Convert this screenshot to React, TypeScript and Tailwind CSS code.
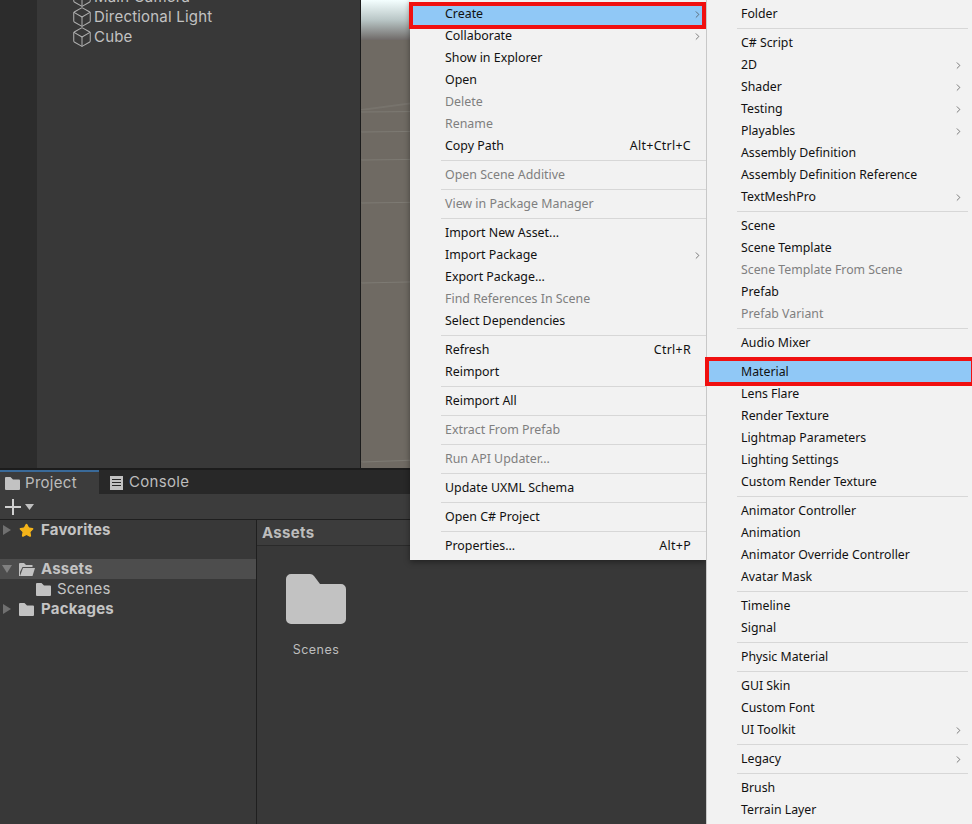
import { ChevronRight, Box, Star } from 'lucide-react'

type Item = { label?: string; disabled?: boolean; sub?: boolean; shortcut?: string; active?: string; sep?: boolean }

const sep: Item = { sep: true }

const mainItems: Item[] = [
  { label: 'Create', sub: true, active: '-left-px right-0 -top-px -bottom-[4px]' },
  { label: 'Collaborate', sub: true },
  { label: 'Show in Explorer' },
  { label: 'Open' },
  { label: 'Delete', disabled: true },
  { label: 'Rename', disabled: true },
  { label: 'Copy Path', shortcut: 'Alt+Ctrl+C' },
  sep,
  { label: 'Open Scene Additive', disabled: true },
  sep,
  { label: 'View in Package Manager', disabled: true },
  sep,
  { label: 'Import New Asset...' },
  { label: 'Import Package', sub: true },
  { label: 'Export Package...' },
  { label: 'Find References In Scene', disabled: true },
  { label: 'Select Dependencies' },
  sep,
  { label: 'Refresh', shortcut: 'Ctrl+R' },
  { label: 'Reimport' },
  sep,
  { label: 'Reimport All' },
  sep,
  { label: 'Extract From Prefab', disabled: true },
  sep,
  { label: 'Run API Updater...', disabled: true },
  sep,
  { label: 'Update UXML Schema' },
  sep,
  { label: 'Open C# Project' },
  sep,
  { label: 'Properties...', shortcut: 'Alt+P' },
]

const createItems: Item[] = [
  { label: 'Folder' },
  sep,
  { label: 'C# Script' },
  { label: '2D', sub: true },
  { label: 'Shader', sub: true },
  { label: 'Testing', sub: true },
  { label: 'Playables', sub: true },
  { label: 'Assembly Definition' },
  { label: 'Assembly Definition Reference' },
  { label: 'TextMeshPro', sub: true },
  sep,
  { label: 'Scene' },
  { label: 'Scene Template' },
  { label: 'Scene Template From Scene', disabled: true },
  { label: 'Prefab' },
  { label: 'Prefab Variant', disabled: true },
  sep,
  { label: 'Audio Mixer' },
  sep,
  { label: 'Material', active: '-left-[2px] -right-[3px] -top-[4px] -bottom-[3px]' },
  { label: 'Lens Flare' },
  { label: 'Render Texture' },
  { label: 'Lightmap Parameters' },
  { label: 'Lighting Settings' },
  { label: 'Custom Render Texture' },
  sep,
  { label: 'Animator Controller' },
  { label: 'Animation' },
  { label: 'Animator Override Controller' },
  { label: 'Avatar Mask' },
  sep,
  { label: 'Timeline' },
  { label: 'Signal' },
  sep,
  { label: 'Physic Material' },
  sep,
  { label: 'GUI Skin' },
  { label: 'Custom Font' },
  { label: 'UI Toolkit', sub: true },
  sep,
  { label: 'Legacy', sub: true },
  sep,
  { label: 'Brush' },
  { label: 'Terrain Layer' },
]

function Menu({ items, className, itemClass, sepClass, arrowClass }: { items: Item[]; className: string; itemClass: string; sepClass: string; arrowClass: string }) {
  return (
    <div className={`absolute top-0 flex flex-col bg-[#f2f2f2] py-[3px] font-['Noto_Sans',sans-serif] ${className}`}>
      {items.map((item, i) =>
        item.sep ? (
          <div key={i} className={`flex h-[7px] items-center ${sepClass}`}>
            <div className="h-px w-full bg-[#d7d7d7]" />
          </div>
        ) : (
          <div
            key={i}
            className={`relative flex h-[22px] shrink-0 items-center pr-[15px] ${itemClass} ${item.active ? 'bg-[#90c8f6]' : ''} ${item.disabled ? 'text-[#7f7f7f]' : 'text-[#111]'}`}
          >
            <span className="flex-1">{item.label}</span>
            {item.shortcut && <span className="tracking-[0.3px]">{item.shortcut}</span>}
            {item.sub && <ChevronRight className={`absolute h-[11px] w-[11px] text-[#444] ${arrowClass}`} strokeWidth={1.5} />}
            {item.active && <div className={`absolute border-[4px] border-[#f01010] ${item.active}`} />}
          </div>
        ),
      )}
    </div>
  )
}

function ClosedFolder({ className }: { className: string }) {
  return (
    <svg className={className} viewBox="0 0 15 13">
      <path d="M0 1a1 1 0 0 1 1-1H5.500L8 2.500H14a1 1 0 0 1 1 1V12a1 1 0 0 1-1 1H1a1 1 0 0 1-1-1Z" fill="#c2c2c2" />
    </svg>
  )
}

function OpenFolder({ className }: { className: string }) {
  return (
    <svg className={className} viewBox="0 0 16 13">
      <path d="M0 1a1 1 0 0 1 1-1H5L7 2H13.500V4H3.500L1 9V13H0Z" fill="#c2c2c2" />
      <path d="M4 5H16L13.500 13H1Z" fill="#c2c2c2" />
    </svg>
  )
}

function GameObject({ label }: { label: string }) {
  return (
    <div className="flex h-5 items-center gap-px pl-[34px] text-[#c2c2c2]">
      <Box className="h-[22px] w-[22px] shrink-0 text-[#b0b0b0]" strokeWidth={1.1} />
      <span className="font-['Inter',sans-serif] text-[15px] tracking-[0.2px]">{label}</span>
    </div>
  )
}

function SceneView() {
  return (
    <div className="relative min-w-0 flex-1 bg-[#6f6a63]">
      <svg className="h-full w-full" viewBox="0 0 50 468" preserveAspectRatio="none">
        <defs>
          <linearGradient id="sky" x1="0" y1="0" x2="0" y2="1">
            <stop offset="0" stopColor="#f4ffff" />
            <stop offset="0.5" stopColor="#b9c6c6" />
            <stop offset="1" stopColor="#6f6a68" />
          </linearGradient>
        </defs>
        <rect width="50" height="40" fill="url(#sky)" />
        <g stroke="#7d7a73" strokeWidth="1" fill="none">
          <path d="M0 112 L50 107" />
          <path d="M0 132 L50 125" />
          <path d="M0 160 L50 153" />
          <path d="M0 203 L50 195" />
          <path d="M0 283 L50 270" />
          <path d="M0 462 L50 440" />
          <path d="M0 110 L38 48" opacity="0.6" />
        </g>
      </svg>
    </div>
  )
}

function TreeRow({ children, selected }: { children: React.ReactNode; selected?: boolean }) {
  return <div className={`flex h-5 items-center ${selected ? 'bg-[#4d4d4d]' : ''}`}>{children}</div>
}

function Arrow({ open }: { open?: boolean }) {
  return (
    <svg className="ml-[2px] mr-[7px] h-[10px] w-[10px] shrink-0" viewBox="0 0 10 10">
      {open ? <path d="M0 1H10L5 9Z" fill="#808080" /> : <path d="M1 0V10L9 5Z" fill="#707070" />}
    </svg>
  )
}

export default function App() {
  return (
    <div className="relative flex h-[824px] w-[972px] flex-col overflow-hidden bg-[#383838] font-['Inter',sans-serif]">
      {/* top panes */}
      <div className="flex h-[468px] shrink-0">
        <div className="w-[37px] bg-[#2c2c2c]" />
        <div className="w-[323px] overflow-hidden bg-[#383838]">
          <div className="-mt-[13px]">
            <GameObject label="Main Camera" />
            <GameObject label="Directional Light" />
            <GameObject label="Cube" />
          </div>
        </div>
        <div className="w-px bg-[#1c1c1c]" />
        <SceneView />
      </div>
      <div className="h-[2px] shrink-0 bg-[#1c1c1c]" />

      {/* tabs */}
      <div className="flex h-[24px] shrink-0 bg-[#282828] text-[15px] tracking-[0.3px] text-[#bdbdbd]">
        <div className="flex w-[99px] items-center gap-[5px] border-t-2 border-[#3a6a99] bg-[#3c3c3c] pl-[5px] pt-px">
          <ClosedFolder className="h-[13px] w-[15px]" />
          Project
        </div>
        <div className="flex items-center gap-[6px] pl-[11px] pt-px">
          <svg className="h-[14px] w-[13px]" viewBox="0 0 13 14">
            <path d="M0 0H13V14H0Z M2 3V4H11V3Z M2 6V7H11V6Z M2 9V10H11V9Z" fill="#c2c2c2" fillRule="evenodd" />
          </svg>
          Console
        </div>
      </div>

      {/* toolbar */}
      <div className="flex h-[26px] shrink-0 items-center gap-[4px] border-b border-[#1f1f1f] bg-[#3c3c3c] pl-[5px] pt-px">
        <svg className="h-[16px] w-[16px]" viewBox="0 0 16 16">
          <path d="M0 8H16M8 0V16" stroke="#d0d0d0" strokeWidth="2" />
        </svg>
        <svg className="h-[6px] w-[9px]" viewBox="0 0 9 6">
          <path d="M0 0H9L4.500 6Z" fill="#c0c0c0" />
        </svg>
      </div>

      {/* project browser */}
      <div className="flex min-h-0 flex-1">
        <div className="w-[256px] shrink-0 text-[15px] tracking-[0.2px] text-[#c4c4c4]">
          <TreeRow>
            <Arrow />
            <Star className="mr-[7px] h-[15px] w-[15px] fill-[#f4b41a] text-[#f4b41a]" />
            <span className="font-bold">Favorites</span>
          </TreeRow>
          <div className="h-[19px]" />
          <TreeRow selected>
            <Arrow open />
            <OpenFolder className="mr-[6px] h-[13px] w-[16px]" />
            <span className="font-bold">Assets</span>
          </TreeRow>
          <TreeRow>
            <div className="w-[36px]" />
            <ClosedFolder className="mr-[6px] h-[13px] w-[15px]" />
            <span>Scenes</span>
          </TreeRow>
          <TreeRow>
            <Arrow />
            <ClosedFolder className="mr-[7px] h-[13px] w-[15px]" />
            <span className="font-bold">Packages</span>
          </TreeRow>
        </div>
        <div className="w-px bg-[#1f1f1f]" />
        <div className="flex min-w-0 flex-1 flex-col">
          <div className="flex h-[26px] items-center border-b border-[#2a2a2a] bg-[#3c3c3c] pl-[5px] pt-[2px] text-[15px] font-bold tracking-[0.3px] text-[#bdbdbd]">
            Assets
          </div>
          <div className="flex w-[118px] flex-col items-center pt-[28px]">
            <svg className="h-[50px] w-[60px]" viewBox="0 0 60 50">
              <path d="M0 5a5 5 0 0 1 5-5H24a5 5 0 0 1 4 2L34 10H55a5 5 0 0 1 5 5V45a5 5 0 0 1-5 5H5a5 5 0 0 1-5-5Z" fill="#c2c2c2" />
            </svg>
            <span className="mt-[17px] text-[12.5px] tracking-[0.5px] text-[#bdbdbd]">Scenes</span>
          </div>
        </div>
      </div>

      {/* context menus */}
      <Menu
        items={mainItems}
        className="left-[410px] w-[296px] text-[12.4px] shadow-[0_2px_6px_rgba(0,0,0,0.4)]"
        itemClass="pl-[35px]"
        sepClass="pl-[31px]"
        arrowClass="right-[3px]"
      />
      <Menu
        items={createItems}
        className="left-[706px] w-[266px] border-l border-[#c8c8c8] text-[12.3px]"
        itemClass="pl-[34px]"
        sepClass="pl-[30px] pr-[4px]"
        arrowClass="right-[8px]"
      />
    </div>
  )
}
